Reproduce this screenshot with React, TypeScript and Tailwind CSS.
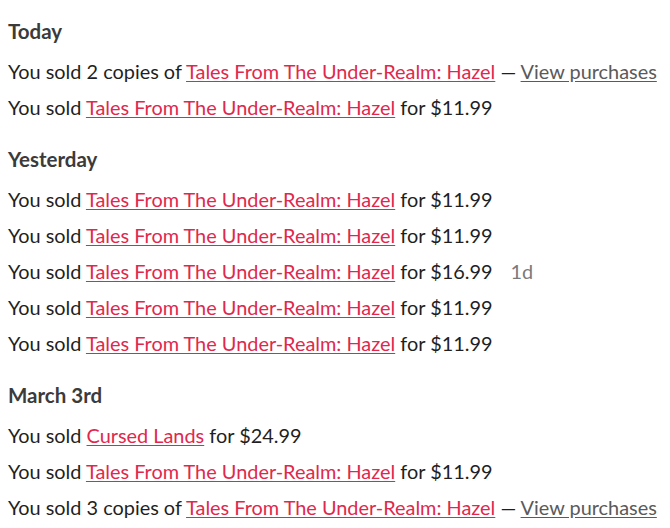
import React from 'react';

type Sale = { copies?: number; title: string; price?: string; ago?: string };

const HAZEL = 'Tales From The Under-Realm: Hazel';

const groups: { label: string; sales: Sale[] }[] = [
  {
    label: 'Today',
    sales: [{ copies: 2, title: HAZEL }, { title: HAZEL, price: '$11.99' }],
  },
  {
    label: 'Yesterday',
    sales: [
      { title: HAZEL, price: '$11.99' },
      { title: HAZEL, price: '$11.99' },
      { title: HAZEL, price: '$16.99', ago: '1d' },
      { title: HAZEL, price: '$11.99' },
      { title: HAZEL, price: '$11.99' },
    ],
  },
  {
    label: 'March 3rd',
    sales: [
      { title: 'Cursed Lands', price: '$24.99' },
      { title: HAZEL, price: '$11.99' },
      { copies: 3, title: HAZEL },
    ],
  },
];

function SaleRow({ sale }: { sale: Sale }) {
  return (
    <div className="h-9 leading-9 whitespace-nowrap">
      You sold {sale.copies ? `${sale.copies} copies of ` : ''}
      <a href="#" className="text-[#e0284d] underline underline-offset-2">
        {sale.title}
      </a>
      {sale.copies ? (
        <>
          {' — '}
          <a href="#" className="text-[#5a5a5a] underline underline-offset-2">
            View purchases
          </a>
        </>
      ) : (
        <> for {sale.price}</>
      )}
      {sale.ago && <span className="ml-[18px] text-[#7a7a7a]">{sale.ago}</span>}
    </div>
  );
}

export default function App() {
  return (
    <div
      className="min-h-screen bg-white px-2 pt-[17px] text-[19.9px] text-[#1f1f1f]"
      style={{ fontFamily: 'Lato, "Open Sans", sans-serif' }}
    >
      <div className="flex flex-col gap-5">
        {groups.map((g) => (
          <section key={g.label}>
            <h2 className="mb-2 h-7 text-[20.5px] font-bold leading-7 text-[#3b3b3b]">{g.label}</h2>
            {g.sales.map((s, i) => (
              <SaleRow key={i} sale={s} />
            ))}
          </section>
        ))}
      </div>
    </div>
  );
}
